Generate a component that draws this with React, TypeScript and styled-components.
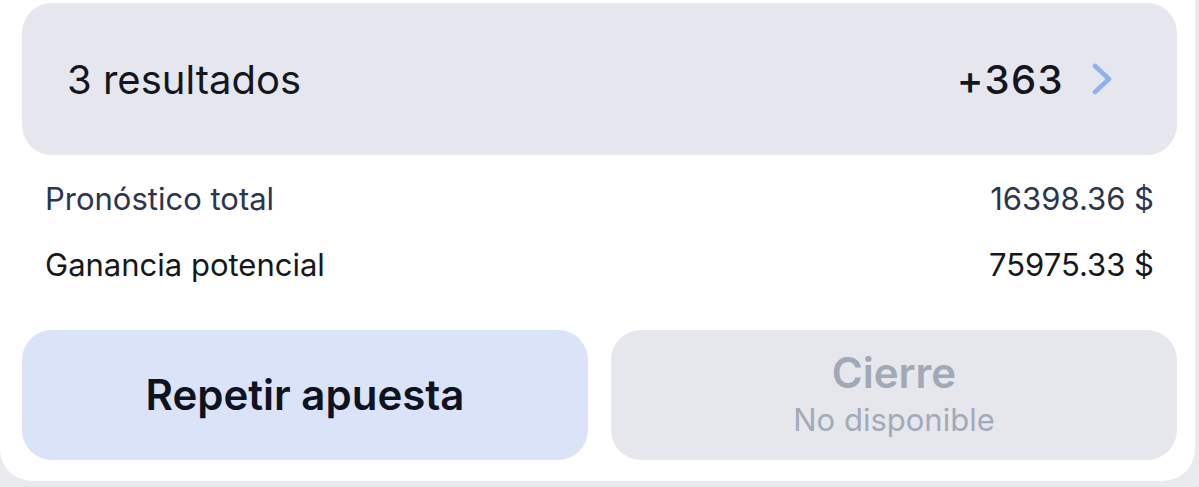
import React from "react";
import styled, { createGlobalStyle } from "styled-components";

const Global = createGlobalStyle`
  html, body { margin: 0; padding: 0; }
  body {
    background: #e9eaee;
    font-family: "Inter", "Noto Sans", "Liberation Sans", sans-serif;
    -webkit-font-smoothing: antialiased;
  }
`;

const Card = styled.div`
  box-sizing: border-box;
  width: 1195px;
  height: 481px;
  background: #ffffff;
  border-radius: 0 0 32px 32px;
  padding: 3px 18px 0 22px;
  display: flex;
  flex-direction: column;
`;

const Summary = styled.div`
  box-sizing: border-box;
  height: 152px;
  background: #e6e7ee;
  border-radius: 30px;
  display: flex;
  align-items: center;
  justify-content: space-between;
  padding: 0 65px 0 45px;
`;

const SummaryTitle = styled.span`
  font-size: 40px;
  font-weight: 400;
  color: #14161d;
`;

const SummaryRight = styled.div`
  display: flex;
  align-items: center;
  gap: 28px;
`;

const Odds = styled.span`
  font-size: 40px;
  font-weight: 500;
  color: #14161d;
  letter-spacing: 1.4px;
`;

const Info = styled.div`
  display: flex;
  flex-direction: column;
  gap: 32px;
  padding: 26px 23px 0 23px;
`;

const InfoRow = styled.div<{ $muted?: boolean }>`
  display: flex;
  justify-content: space-between;
  align-items: center;
  height: 34px;
  font-size: 31px;
  color: ${(p) => (p.$muted ? "#2b3550" : "#15171d")};
`;

const Actions = styled.div`
  display: grid;
  grid-template-columns: 1fr 1fr;
  gap: 23px;
  margin-top: 49px;
`;

const ActionButton = styled.div<{ $primary?: boolean }>`
  height: 130px;
  border-radius: 30px;
  background: ${(p) => (p.$primary ? "#dbe3f8" : "#e6e7ed")};
  display: flex;
  flex-direction: column;
  align-items: center;
  justify-content: center;
`;

const ActionLabel = styled.span<{ $disabled?: boolean }>`
  font-size: 42px;
  font-weight: 600;
  color: ${(p) => (p.$disabled ? "#a1a8b6" : "#0f1320")};
  line-height: 46px;
`;

const ActionSub = styled.span`
  font-size: 31px;
  color: #a3aab7;
  line-height: 40px;
  margin-top: 4px;
`;

const Chevron = () => (
  <svg width="20" height="32" viewBox="0 0 20 32" fill="none">
    <path
      d="M3 3 L17 16 L3 29"
      stroke="#8fb0ea"
      strokeWidth="4.5"
      strokeLinecap="round"
      strokeLinejoin="round"
    />
  </svg>
);

export default function App() {
  return (
    <>
      <Global />
      <Card>
        <Summary>
          <SummaryTitle>3 resultados</SummaryTitle>
          <SummaryRight>
            <Odds>+363</Odds>
            <Chevron />
          </SummaryRight>
        </Summary>
        <Info>
          <InfoRow $muted>
            <span>Pronóstico total</span>
            <span>16398.36 $</span>
          </InfoRow>
          <InfoRow>
            <span>Ganancia potencial</span>
            <span>75975.33 $</span>
          </InfoRow>
        </Info>
        <Actions>
          <ActionButton $primary>
            <ActionLabel>Repetir apuesta</ActionLabel>
          </ActionButton>
          <ActionButton>
            <ActionLabel $disabled>Cierre</ActionLabel>
            <ActionSub>No disponible</ActionSub>
          </ActionButton>
        </Actions>
      </Card>
    </>
  );
}
